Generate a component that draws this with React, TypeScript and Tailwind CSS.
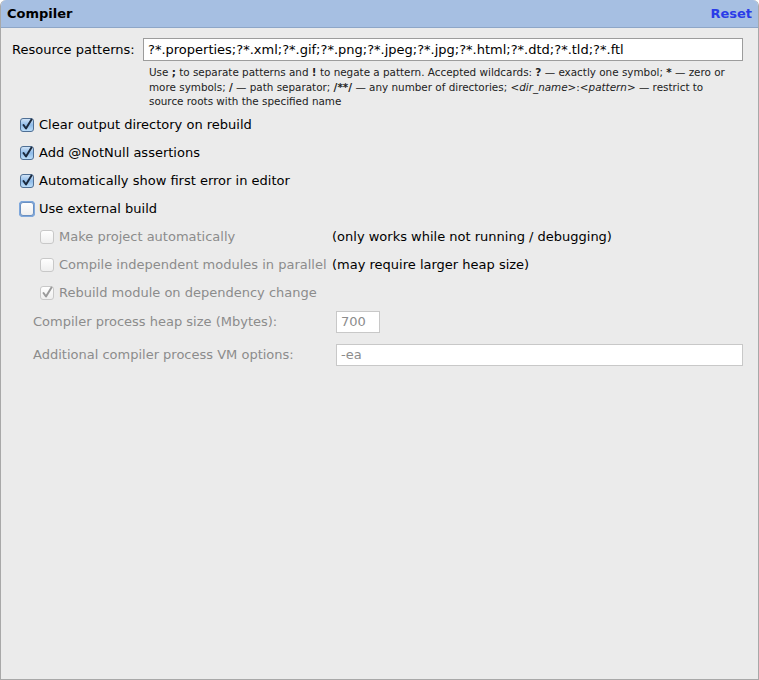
import React from 'react';

const font = { fontFamily: '"DejaVu Sans", "Lucida Grande", sans-serif' };

const Box = ({ checked, disabled, focused }: { checked?: boolean; disabled?: boolean; focused?: boolean }) => (
  <svg width="16" height="16" viewBox="0 0 16 16" className="shrink-0">
    <defs>
      <linearGradient id="cbOn" x1="0" y1="0" x2="0" y2="1">
        <stop offset="0" stopColor="#d4e6f8" />
        <stop offset="0.5" stopColor="#8fbbe8" />
        <stop offset="1" stopColor="#bfe0fb" />
      </linearGradient>
      <linearGradient id="cbOff" x1="0" y1="0" x2="0" y2="1">
        <stop offset="0" stopColor="#ffffff" />
        <stop offset="1" stopColor="#eeeeee" />
      </linearGradient>
    </defs>
    {focused && <rect x="0.5" y="0.5" width="15" height="15" rx="4" fill="none" stroke="#7fa8dc" strokeWidth="2" />}
    <rect
      x="1.5"
      y="1.5"
      width="13"
      height="13"
      rx="2.5"
      fill={checked && !disabled ? 'url(#cbOn)' : 'url(#cbOff)'}
      stroke={disabled ? '#c8c8c8' : checked ? '#4f6f94' : focused ? '#6a8fc0' : '#8a8a8a'}
    />
    {checked && (
      <path
        d="M4.5 8 L7 11.5 L12.5 2.5"
        fill="none"
        stroke={disabled ? '#9a9a9a' : '#1b2a3e'}
        strokeWidth="2"
        strokeLinecap="round"
        strokeLinejoin="round"
      />
    )}
  </svg>
);

const Check = ({ label, checked, disabled, focused }: { label: string; checked?: boolean; disabled?: boolean; focused?: boolean }) => (
  <div className="flex items-center gap-[4px] h-[28px] whitespace-nowrap">
    <Box checked={checked} disabled={disabled} focused={focused} />
    <span className={disabled ? 'text-[#8c8c8c]' : 'text-black'}>{label}</span>
  </div>
);

export default function App() {
  return (
    <div className="w-[759px] h-[680px] bg-[#ebebeb] text-[13px] flex flex-col border-l border-r border-b border-[#a8a8a8] rounded-t-[6px] overflow-hidden" style={font}>
      <div className="h-[28px] bg-[#a6bfe2] border-b border-[#8ea6c7] flex items-center justify-between pl-[6px] pr-[6px] shrink-0">
        <span className="font-bold text-black">Compiler</span>
        <span className="font-bold text-[#2a3ce8]">Reset</span>
      </div>

      <div className="flex flex-col pl-[11px] pr-[15px] pt-[10px]">
        <div className="flex items-center h-[23px]">
          <span className="w-[131px] shrink-0">Resource patterns:</span>
          <div className="flex-1 h-[23px] bg-white border border-[#9c9c9c] flex items-center px-[4px]">
            ?*.properties;?*.xml;?*.gif;?*.png;?*.jpeg;?*.jpg;?*.html;?*.dtd;?*.tld;?*.ftl
          </div>
        </div>
        <p className="pl-[137px] pr-[4px] pt-[4px] text-[10.4px] leading-[14.5px] text-[#222]">
          Use <b>;</b> to separate patterns and <b>!</b> to negate a pattern. Accepted wildcards: <b>?</b> — exactly one symbol; <b>*</b> — zero or more symbols; <b>/</b> — path separator; <b>/**/</b> — any number of directories; <i>&lt;dir_name&gt;</i>:<i>&lt;pattern&gt;</i> — restrict to source roots with the specified name
        </p>

        <div className="flex flex-col pl-[7px] pt-[2px]">
          <Check label="Clear output directory on rebuild" checked />
          <Check label="Add @NotNull assertions" checked />
          <Check label="Automatically show first error in editor" checked />
          <Check label="Use external build" focused />
          <div className="flex flex-col pl-[20px]">
            <div className="flex items-center">
              <div className="w-[293px] shrink-0"><Check label="Make project automatically" disabled /></div>
              <span className="whitespace-nowrap">(only works while not running / debugging)</span>
            </div>
            <div className="flex items-center">
              <div className="w-[293px] shrink-0"><Check label="Compile independent modules in parallel" disabled /></div>
              <span className="whitespace-nowrap">(may require larger heap size)</span>
            </div>
            <Check label="Rebuild module on dependency change" checked disabled />
          </div>
        </div>

        <div className="flex flex-col pl-[21px] pt-[4px] gap-[11px] text-[#8c8c8c]">
          <div className="flex items-center h-[22px]">
            <span className="w-[303px] shrink-0">Compiler process heap size (Mbytes):</span>
            <div className="w-[44px] h-[22px] bg-white border border-[#c8c8c8] flex items-center px-[4px]">700</div>
          </div>
          <div className="flex items-center h-[22px]">
            <span className="w-[303px] shrink-0">Additional compiler process VM options:</span>
            <div className="flex-1 h-[22px] bg-white border border-[#c8c8c8] flex items-center px-[4px]">-ea</div>
          </div>
        </div>
      </div>
    </div>
  );
}
